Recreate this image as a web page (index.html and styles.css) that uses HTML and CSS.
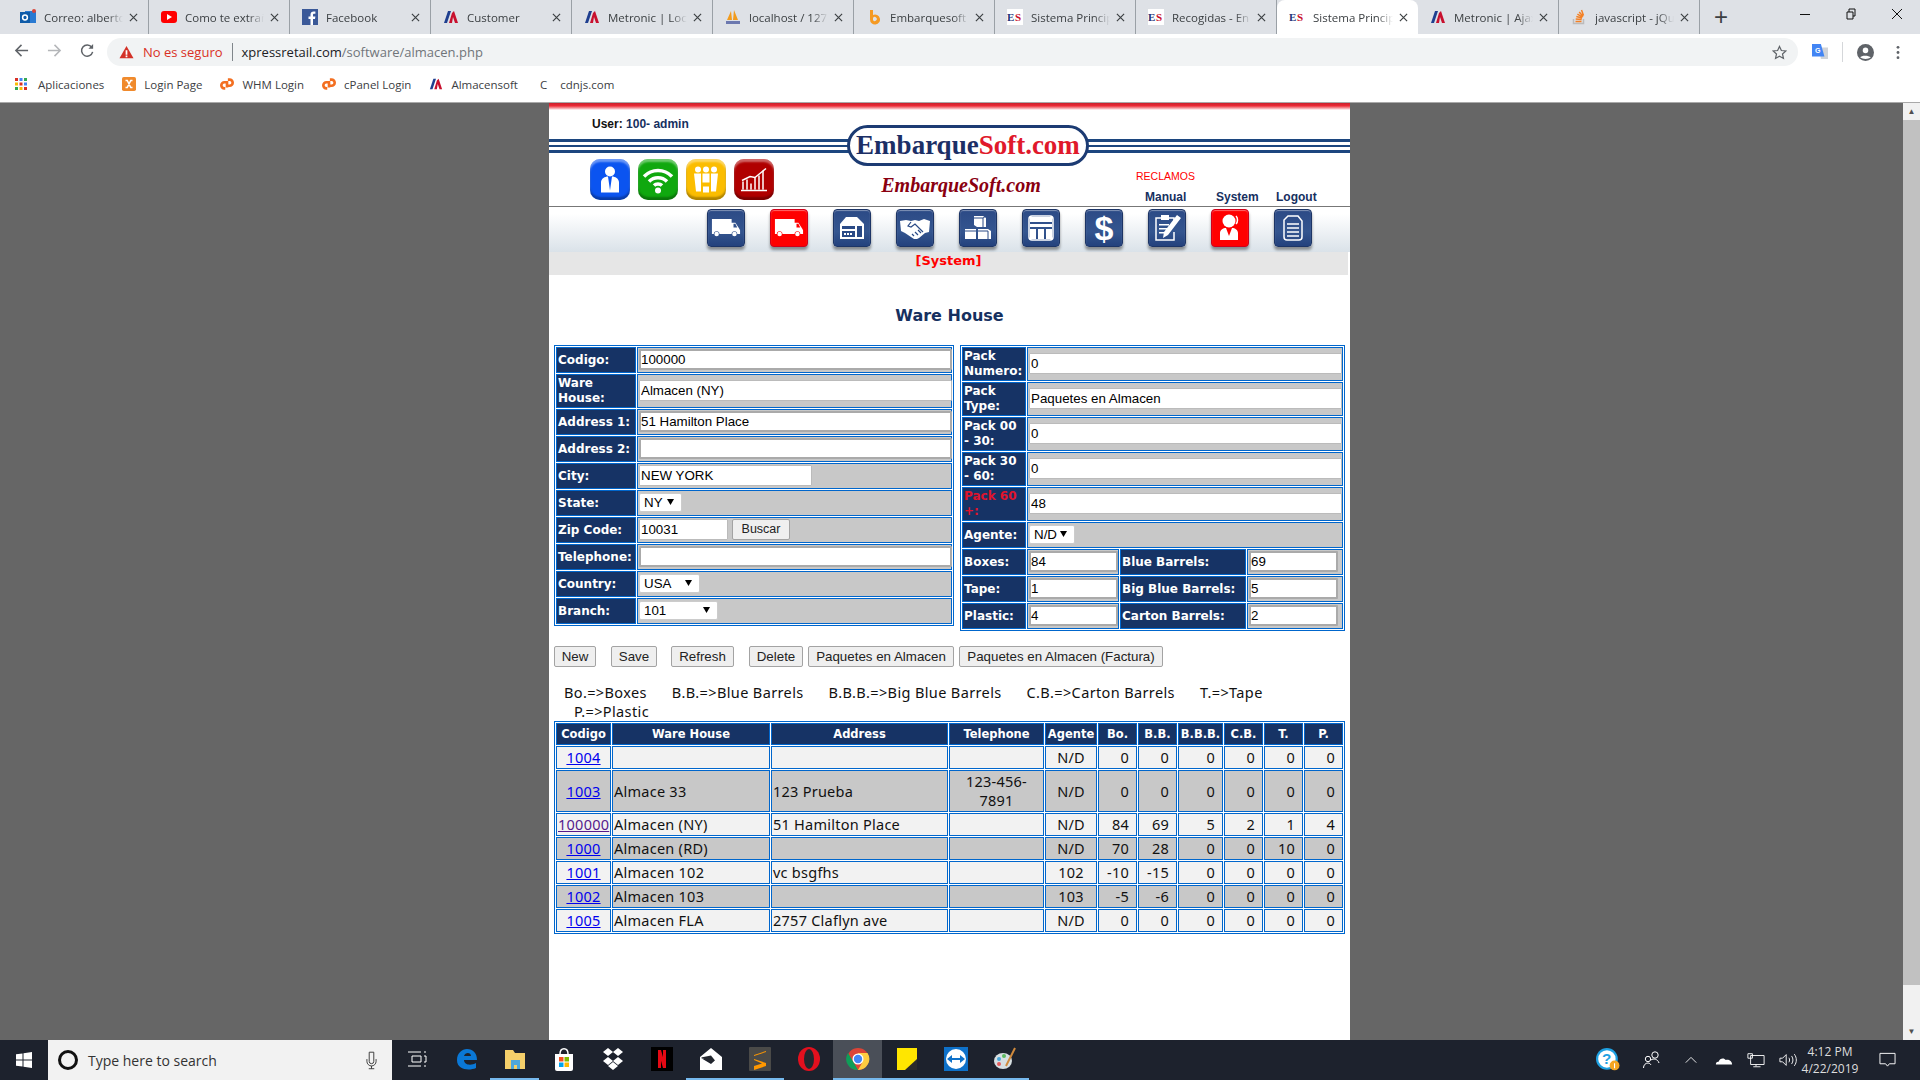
FILE: index.html
```html
<!DOCTYPE html>
<html lang="en">
<head>
    <meta charset="UTF-8">
    <title>Sistema Principal</title>
    <link rel="stylesheet" href="styles.css">
</head>
<body>
    <svg class="sprites" width="0" height="0">
        <symbol id="van" viewBox="0 0 32 22"><path fill="#fff" d="M1 2h21v4h4l4 6 1 2v4h-3a3 3 0 0 0-6 0H9a3 3 0 0 0-6 0H1zM24 7v4h4l-2-4z"/><circle cx="6" cy="18" r="2.4" fill="#fff"/><circle cx="25" cy="18" r="2.4" fill="#fff"/></symbol>
        <symbol id="ms" viewBox="0 0 16 16"><path fill="#1f3f8f" d="M1 14 5 2h3L4 14z"/><path fill="#c8102e" d="M6 14 9 4l2-2 4 12h-3l-2-6-1 6z"/></symbol>
        <symbol id="es" viewBox="0 0 16 16"><rect width="16" height="16" fill="#fff"/><text x="0" y="12" font-family="Liberation Serif" font-weight="bold" font-size="11" fill="#24367a">E</text><text x="8" y="12" font-family="Liberation Serif" font-weight="bold" font-size="11" fill="#c8102e">S</text></symbol>
        <symbol id="close" viewBox="0 0 10 10"><path stroke="#3c4043" stroke-width="1.3" d="M1 1l8 8M9 1 1 9"/></symbol>
        <symbol id="cp" viewBox="0 0 16 16"><path fill="none" stroke="#f36f21" stroke-width="3" d="M6 13H5a3.5 3.5 0 0 1 0-7h3v6M8 10h3a3.5 3.5 0 0 0 0-7H9"/></symbol>
    </svg>

    <div class="tabstrip">
        <div class="tab"><svg class="fav" viewBox="0 0 16 16"><rect x="5" y="2" width="11" height="12" fill="#2a7ad2"/><rect y="3" width="10" height="11" fill="#0f5ba8"/><circle cx="5" cy="8.5" r="2.4" fill="none" stroke="#fff" stroke-width="1.5"/><circle cx="14" cy="2" r="2" fill="#d9453a"/></svg><span class="tab-title">Correo: alberto</span><svg class="tab-x"><use href="#close"/></svg></div>
        <div class="tab"><svg class="fav" viewBox="0 0 16 16"><rect y="2" width="16" height="12" rx="3" fill="#f00"/><path fill="#fff" d="m6 5 5 3-5 3z"/></svg><span class="tab-title">Como te extraño</span><svg class="tab-x"><use href="#close"/></svg></div>
        <div class="tab"><svg class="fav" viewBox="0 0 16 16"><rect width="16" height="16" fill="#3b5998"/><path fill="#fff" d="M11 16v-6h2l.4-2.5H11V6c0-.8.3-1.2 1.2-1.2h1.2V2.6C13 2.5 12.300 2.500 11.600 2.500 9.800 2.500 8.500 3.600 8.500 5.700v1.800h-2V10h2v6z"/></svg><span class="tab-title">Facebook</span><svg class="tab-x"><use href="#close"/></svg></div>
        <div class="tab"><svg class="fav"><use href="#ms"/></svg><span class="tab-title">Customer</span><svg class="tab-x"><use href="#close"/></svg></div>
        <div class="tab"><svg class="fav"><use href="#ms"/></svg><span class="tab-title">Metronic | Local</span><svg class="tab-x"><use href="#close"/></svg></div>
        <div class="tab"><svg class="fav" viewBox="0 0 16 16"><path fill="#f29b1d" d="M2 11 6 2l1 9zM8 11l1-10 4 10z"/><rect x="1" y="12" width="14" height="3" fill="#6c78af"/></svg><span class="tab-title">localhost / 127</span><svg class="tab-x"><use href="#close"/></svg></div>
        <div class="tab"><svg class="fav" viewBox="0 0 16 16"><path fill="#f59a23" d="M4 1h3v5a5 5 0 1 1-3 4.500zM7 9v2a2 2 0 1 0 0-2z"/></svg><span class="tab-title">Embarquesoft</span><svg class="tab-x"><use href="#close"/></svg></div>
        <div class="tab"><svg class="fav"><use href="#es"/></svg><span class="tab-title">Sistema Principal</span><svg class="tab-x"><use href="#close"/></svg></div>
        <div class="tab"><svg class="fav"><use href="#es"/></svg><span class="tab-title">Recogidas - En</span><svg class="tab-x"><use href="#close"/></svg></div>
        <div class="tab tab-active"><svg class="fav"><use href="#es"/></svg><span class="tab-title">Sistema Principal</span><svg class="tab-x"><use href="#close"/></svg></div>
        <div class="tab"><svg class="fav"><use href="#ms"/></svg><span class="tab-title">Metronic | Ajax</span><svg class="tab-x"><use href="#close"/></svg></div>
        <div class="tab"><svg class="fav" viewBox="0 0 16 16"><path fill="none" stroke="#bcbbbb" stroke-width="1.500" d="M2.500 10v4.500h10V10"/><path fill="none" stroke="#f48024" stroke-width="1.500" d="M4.500 12.500h6M4.700 10l6 .6M5.300 7.600l5.800 1.500M6.400 5.200l5.200 3M8.200 3l3.900 4.500M10.500 1l2 5.500"/></svg><span class="tab-title">javascript - jQuery</span><svg class="tab-x"><use href="#close"/></svg></div>
        <div class="newtab">+</div>
        <div class="winctl">
            <svg viewBox="0 0 12 12"><path stroke="#111" d="M1 6.500h10"/></svg>
            <svg viewBox="0 0 12 12"><path fill="none" stroke="#111" d="M2 4h6v7H2zM4 4V1h6v7H8"/></svg>
            <svg viewBox="0 0 12 12"><path stroke="#111" d="m1 1 10 10M11 1 1 11"/></svg>
        </div>
    </div>

    <div class="toolbar">
        <svg class="tool-btn" viewBox="0 0 16 16"><path fill="none" stroke="#5f6368" stroke-width="1.600" d="M15 8H2M8 2 2 8l6 6"/></svg>
        <svg class="tool-btn" viewBox="0 0 16 16"><path fill="none" stroke="#b4b6b9" stroke-width="1.600" d="M1 8h13M8 2l6 6-6 6"/></svg>
        <svg class="tool-btn" viewBox="0 0 16 16"><path fill="none" stroke="#5f6368" stroke-width="1.600" d="M13.500 9.500a6 6 0 1 1-1-5"/><path fill="#5f6368" d="M14 1v5H9z"/></svg>
        <div class="omnibox">
            <svg class="warn" viewBox="0 0 16 16"><path fill="#d33127" d="M8 1 16 15H0z"/><path fill="#fff" d="M7 6h2v5H7zM7 12h2v2H7z"/></svg>
            <span class="insecure">No es seguro</span>
            <span class="url"><b>xpressretail.com</b>/software/almacen.php</span>
            <svg class="star" viewBox="0 0 16 16"><path fill="none" stroke="#5f6368" stroke-width="1.300" d="m8 1.500 2 4.400 4.800.5-3.600 3.200 1 4.700L8 11.900l-4.200 2.400 1-4.700L1.200 6.400 6 5.900z"/></svg>
        </div>
        <div class="tool-right">
            <svg class="translate" viewBox="0 0 18 20"><path fill="#d0d3d8" d="M8 5h10v13H10z"/><path fill="#4285f4" d="M0 1h10l4 14H0z"/><text x="3.500" y="11" font-family="Liberation Sans" font-weight="bold" font-size="8" fill="#fff">G</text></svg>
            <span class="tool-sep"></span>
            <svg class="profile" viewBox="0 0 16 16"><circle cx="8" cy="8" r="8" fill="#5f6368"/><circle cx="8" cy="6" r="2.600" fill="#fff"/><path fill="#fff" d="M3 12.500c1-2 8-2 10 0-2.500 2-7.500 2-10 0z"/></svg>
            <svg class="kebab" viewBox="0 0 4 16"><circle cx="2" cy="2.500" r="1.500" fill="#5f6368"/><circle cx="2" cy="8" r="1.500" fill="#5f6368"/><circle cx="2" cy="13.500" r="1.500" fill="#5f6368"/></svg>
        </div>
    </div>

    <div class="bookmarks">
        <span class="bm bm-apps"><svg class="bm-icon" viewBox="0 0 12 12"><path fill="#d93025" d="M0 0h3v3H0z"/><path fill="#4285f4" d="M4.500 0h3v3h-3z"/><path fill="#34a853" d="M9 0h3v3H9z"/><path fill="#fbbc04" d="M0 4.500h3v3H0z"/><path fill="#d93025" d="M4.500 4.500h3v3h-3z"/><path fill="#4285f4" d="M9 4.500h3v3H9z"/><path fill="#34a853" d="M0 9h3v3H0z"/><path fill="#fbbc04" d="M4.500 9h3v3h-3z"/><path fill="#d93025" d="M9 9h3v3H9z"/></svg>Aplicaciones</span>
        <span class="bm"><svg class="bm-icon" viewBox="0 0 16 16"><rect width="16" height="16" rx="2" fill="#f08a2c"/><path fill="none" stroke="#fff" stroke-width="1.800" d="M4 4h2l4 8h2M12 4h-2l-4 8H4"/></svg>Login Page</span>
        <span class="bm"><svg class="bm-icon"><use href="#cp"/></svg>WHM Login</span>
        <span class="bm"><svg class="bm-icon"><use href="#cp"/></svg>cPanel Login</span>
        <span class="bm"><svg class="bm-icon"><use href="#ms"/></svg>Almacensoft</span>
        <span class="bm"><span class="bm-c">C</span>cdnjs.com</span>
    </div>

    <div class="viewport">
        <div class="page-wrap">
            <div class="page">
                <div class="masthead">
                    <div class="mast-left">
                        <div class="user"><b>User:</b> <span>100- admin</span></div>
                        <div class="app-icons">
                            <div class="app-icon app-blue"><svg viewBox="0 0 32 32"><circle cx="16" cy="8" r="5" fill="#fff"/><path fill="#fff" d="M7 29V19c0-4 4-6 7-6l2 14 2-14c3 0 7 2 7 6v10z"/></svg></div>
                            <div class="app-icon app-green"><svg viewBox="0 0 32 32"><g fill="none" stroke="#fff" stroke-width="3.500"><path d="M2 13c8-8 20-8 28 0"/><path d="M7 18c5-5 13-5 18 0"/><path d="M12 22c2-2 6-2 8 0"/></g><circle cx="16" cy="27" r="3" fill="#fff"/></svg></div>
                            <div class="app-icon app-yellow"><svg viewBox="0 0 32 32"><g fill="#fff"><circle cx="8" cy="6" r="3"/><circle cx="16" cy="6" r="3"/><circle cx="24" cy="6" r="3"/><path d="M4 10h7v18H6zM12.500 10h7v9h-7zM21 10h7l-2 18h-5zM13 23h6v6h-6z"/></g></svg></div>
                            <div class="app-icon app-red"><svg viewBox="0 0 32 32"><g fill="none" stroke="#fff" stroke-width="1.500"><path d="M3 27h26M5 26V18M9 26V16M13 26v-6M17 26V14M21 26V12M25 26V7"/><path d="m4 17 8-4 5 1 11-9"/></g></svg></div>
                        </div>
                    </div>
                    <div class="mast-center">
                        <div class="logo"><span class="logo-navy">Embarque</span><span class="logo-red">Soft.com</span></div>
                        <div class="tagline">EmbarqueSoft.com</div>
                    </div>
                    <div class="mast-right">
                        <a class="reclamos">RECLAMOS</a>
                        <div class="mast-links"><a class="lnk-manual">Manual</a><a class="lnk-system">System</a><a>Logout</a></div>
                    </div>
                </div>

                <div class="nav-strip">
                    <div class="nav-icon"><svg viewBox="0 0 32 32"><use href="#van" x="1" y="5" width="30" height="21"/></svg></div>
                    <div class="nav-icon nav-red"><svg viewBox="0 0 32 32"><use href="#van" x="1" y="5" width="30" height="21"/></svg></div>
                    <div class="nav-icon"><svg viewBox="0 0 32 32"><path fill="#fff" d="M4 12 10 5h11l7 7v15H4z"/><path fill="#2a4a86" d="M6 14h13v3H6zM6 19h13v6H6zM21 14h5v11h-5z"/><path fill="#fff" d="M8 21h2v2H8zM11 21h2v2h-2zM14 21h2v2h-2z"/></svg></div>
                    <div class="nav-icon"><svg viewBox="0 0 32 32"><path fill="#fff" d="M1 9l6-1 5 1 4-1 4 1 5-2 6 2-1 11-4 1-6 5-2 1-3 0-3-2-6-4-4-2z"/><path fill="none" stroke="#2a4a86" stroke-width="1.200" d="m12 10-3 4 3 1 4-3 8 8M15 24l-2-2M19 23l-3-3M22 21l-3-3"/></svg></div>
                    <div class="nav-icon"><svg viewBox="0 0 32 32"><path fill="#fff" d="M12 4h9l3 2v9h-9l-3-2zM3 17h11v10H3zM16 17h10l3 2v8H16z"/><path fill="none" stroke="#2a4a86" d="M12 6h9l3-2M21 6v9M3 19h11M16 19h10v8"/></svg></div>
                    <div class="nav-icon"><svg viewBox="0 0 32 32"><rect x="4" y="4" width="24" height="24" rx="3" fill="none" stroke="#fff" stroke-width="1.500"/><path fill="#fff" d="M5 5h22v5H5zM5 12h22v3H5zM5 17h6v10H5zM13 17h6v10h-6zM21 17h6v10h-6z"/></svg></div>
                    <div class="nav-icon"><span class="nav-dollar">$</span></div>
                    <div class="nav-icon"><svg viewBox="0 0 32 32"><path fill="none" stroke="#fff" stroke-width="1.500" d="M18 6h5v6M10 6H5v22h18V20"/><path fill="#fff" d="M10 3h8v5h-8zM8 12h10v1.500H8zM8 16h8v1.500H8zM8 20h5v1.500H8zM26 3l4 3-13 17-5 3 1-6z"/></svg></div>
                    <div class="nav-icon nav-red"><svg viewBox="0 0 32 32"><circle cx="15" cy="9" r="6.500" fill="#fff"/><path fill="none" stroke="#fff" stroke-width="1.500" d="M22 4c2 2 2 6 0 8"/><path fill="#fff" d="M6 28V21c0-3 3-5 6-5l3 8 3-8c3 0 6 2 6 5v7z"/></svg></div>
                    <div class="nav-icon"><svg viewBox="0 0 32 32"><path fill="none" stroke="#fff" stroke-width="1.500" d="M11 4h10l4 5v16a3 3 0 0 1-3 3H10a3 3 0 0 1-3-3V8z"/><path stroke="#fff" stroke-width="1.500" d="M10 12h12M10 16h12M10 20h12M10 24h12"/></svg></div>
                </div>
                <div class="sys-band">[System]</div>

                <h2 class="page-title">Ware House</h2>

                <div class="forms">
                    <table class="ftable ftable-left">
                        <colgroup><col class="c-l1"><col></colgroup>
                        <tr><th>Codigo:</th><td><input class="inp inp-full" value="100000"></td></tr>
                        <tr class="row-tall"><th>Ware House:</th><td><input class="inp inp-full inp-thin" value="Almacen (NY)"></td></tr>
                        <tr><th>Address 1:</th><td><input class="inp inp-full" value="51 Hamilton Place"></td></tr>
                        <tr><th>Address 2:</th><td><input class="inp inp-full" value=""></td></tr>
                        <tr><th>City:</th><td><input class="inp inp-city inp-thin" value="NEW YORK"></td></tr>
                        <tr><th>State:</th><td><select class="sel sel-state"><option>NY</option></select></td></tr>
                        <tr><th>Zip Code:</th><td><input class="inp inp-zip inp-thin" value="10031"><button class="btn btn-buscar">Buscar</button></td></tr>
                        <tr><th>Telephone:</th><td><input class="inp inp-full" value=""></td></tr>
                        <tr><th>Country:</th><td><select class="sel sel-country"><option>USA</option></select></td></tr>
                        <tr><th>Branch:</th><td><select class="sel sel-branch"><option>101</option></select></td></tr>
                    </table>

                    <table class="ftable ftable-right">
                        <colgroup><col class="c-r1"><col class="c-r2"><col class="c-r3"><col></colgroup>
                        <tr class="row-tall"><th>Pack Numero:</th><td colspan="3"><input class="inp inp-full inp-thin" value="0"></td></tr>
                        <tr class="row-tall"><th>Pack Type:</th><td colspan="3"><input class="inp inp-full inp-thin" value="Paquetes en Almacen"></td></tr>
                        <tr class="row-tall"><th>Pack 00 - 30:</th><td colspan="3"><input class="inp inp-full inp-thin" value="0"></td></tr>
                        <tr class="row-tall"><th>Pack 30 - 60:</th><td colspan="3"><input class="inp inp-full inp-thin" value="0"></td></tr>
                        <tr class="row-tall"><th class="th-alert">Pack 60 +:</th><td colspan="3"><input class="inp inp-full inp-thin" value="48"></td></tr>
                        <tr><th>Agente:</th><td colspan="3"><select class="sel sel-agent"><option>N/D</option></select></td></tr>
                        <tr><th>Boxes:</th><td><input class="inp inp-small" value="84"></td><th>Blue Barrels:</th><td><input class="inp inp-small" value="69"></td></tr>
                        <tr><th>Tape:</th><td><input class="inp inp-small" value="1"></td><th>Big Blue Barrels:</th><td><input class="inp inp-small" value="5"></td></tr>
                        <tr><th>Plastic:</th><td><input class="inp inp-small" value="4"></td><th>Carton Barrels:</th><td><input class="inp inp-small" value="2"></td></tr>
                    </table>
                </div>

                <div class="actions">
                    <button class="btn btn-new">New</button>
                    <button class="btn btn-save">Save</button>
                    <button class="btn btn-refresh">Refresh</button>
                    <button class="btn btn-delete">Delete</button>
                    <button class="btn btn-paq">Paquetes en Almacen</button>
                    <button class="btn btn-fact">Paquetes en Almacen (Factura)</button>
                </div>

                <div class="legend">
                    <span>Bo.=&gt;Boxes</span>
                    <span>B.B.=&gt;Blue Barrels</span>
                    <span>B.B.B.=&gt;Big Blue Barrels</span>
                    <span>C.B.=&gt;Carton Barrels</span>
                    <span>T.=&gt;Tape</span>
                    <span class="legend-last">P.=&gt;Plastic</span>
                </div>

                <table class="dtable">
                    <colgroup>
                        <col class="d1"><col class="d2"><col class="d3"><col class="d4"><col class="d5">
                        <col class="d6"><col class="d6"><col class="d8"><col class="d6"><col class="d6"><col class="d6">
                    </colgroup>
                    <thead>
                        <tr><th>Codigo</th><th>Ware House</th><th>Address</th><th>Telephone</th><th>Agente</th><th>Bo.</th><th>B.B.</th><th>B.B.B.</th><th>C.B.</th><th>T.</th><th>P.</th></tr>
                    </thead>
                    <tbody>
                        <tr><td class="ctr"><a href="#1004">1004</a></td><td></td><td></td><td></td><td class="ctr">N/D</td><td class="num">0</td><td class="num">0</td><td class="num">0</td><td class="num">0</td><td class="num">0</td><td class="num">0</td></tr>
                        <tr class="row-two"><td class="ctr"><a href="#1003">1003</a></td><td>Almace 33</td><td>123 Prueba</td><td class="ctr">123-456-7891</td><td class="ctr">N/D</td><td class="num">0</td><td class="num">0</td><td class="num">0</td><td class="num">0</td><td class="num">0</td><td class="num">0</td></tr>
                        <tr><td class="ctr"><a class="visited" href="#100000">100000</a></td><td>Almacen (NY)</td><td>51 Hamilton Place</td><td></td><td class="ctr">N/D</td><td class="num">84</td><td class="num">69</td><td class="num">5</td><td class="num">2</td><td class="num">1</td><td class="num">4</td></tr>
                        <tr><td class="ctr"><a href="#1000">1000</a></td><td>Almacen (RD)</td><td></td><td></td><td class="ctr">N/D</td><td class="num">70</td><td class="num">28</td><td class="num">0</td><td class="num">0</td><td class="num">10</td><td class="num">0</td></tr>
                        <tr><td class="ctr"><a href="#1001">1001</a></td><td>Almacen 102</td><td>vc bsgfhs</td><td></td><td class="ctr">102</td><td class="num">-10</td><td class="num">-15</td><td class="num">0</td><td class="num">0</td><td class="num">0</td><td class="num">0</td></tr>
                        <tr><td class="ctr"><a href="#1002">1002</a></td><td>Almacen 103</td><td></td><td></td><td class="ctr">103</td><td class="num">-5</td><td class="num">-6</td><td class="num">0</td><td class="num">0</td><td class="num">0</td><td class="num">0</td></tr>
                        <tr><td class="ctr"><a href="#1005">1005</a></td><td>Almacen FLA</td><td>2757 Claflyn ave</td><td></td><td class="ctr">N/D</td><td class="num">0</td><td class="num">0</td><td class="num">0</td><td class="num">0</td><td class="num">0</td><td class="num">0</td></tr>
                    </tbody>
                </table>
            </div>
        </div>
        <div class="scrollbar">
            <span class="sb-arrow">▲</span>
            <div class="sb-thumb"></div>
            <span class="sb-arrow">▼</span>
        </div>
    </div>

    <div class="taskbar">
        <svg class="start" viewBox="0 0 16 16"><path fill="#fff" d="M0 2.300 6.500 1.400V7.500H0zM7.500 1.300 16 0V7.500H7.500zM0 8.500H6.500V14.600L0 13.700zM7.500 8.500H16V16L7.500 14.700z"/></svg>
        <div class="search">
            <span class="cortana"></span>
            <span class="search-text">Type here to search</span>
            <svg class="mic" viewBox="0 0 12 20"><path fill="none" stroke="#333" d="M3.500 1.500h5v10a2.500 2.500 0 0 1-5 0zM1 9v2.500a5 5 0 0 0 10 0V9M6 16.500v3M3 19.500h6"/></svg>
        </div>
        <div class="task-icons">
            <span class="task"><svg viewBox="0 0 20 20"><g fill="none" stroke="#fff"><path d="M1 3h13M1 17h13M5 7h9v6H5z"/><path d="M17 3h2M17 7h2v6h-2M17 17h2"/></g></svg></span>
            <span class="task"><svg class="t-big" viewBox="0 0 24 24"><path fill="#0a78d7" d="M3 13C3 6 8 2 13 2c6 0 10 4 10 11H10c0 5 7 6 12 3v5c-7 3-19 2-19-8zm7-4h7c0-4-6-4-7 0z"/></svg></span>
            <span class="task task-on"><svg class="t-big" viewBox="0 0 24 24"><path fill="#f5cf6a" d="M2 3h8l2 3h10v16H2z"/><path fill="#4fa7dd" d="M8 13h9v9h-3v-4h-3v4H8z"/></svg></span>
            <span class="task"><svg class="t-big" viewBox="0 0 24 24"><path fill="none" stroke="#fff" stroke-width="1.500" d="M8 7c0-7 8-7 8 0"/><path fill="#fff" d="M3 7h18v15a2 2 0 0 1-2 2H5a2 2 0 0 1-2-2z"/><path fill="#f25022" d="M7 10h4.500v4.500H7z"/><path fill="#7fba00" d="M12.500 10H17v4.500h-4.500z"/><path fill="#00a4ef" d="M7 15.500h4.500V20H7z"/><path fill="#ffb900" d="M12.500 15.500H17V20h-4.500z"/></svg></span>
            <span class="task"><svg class="t-big" viewBox="0 0 24 24"><path fill="#fff" d="m7 1 5 4-5 4-5-4zm10 0 5 4-5 4-5-4zM7 10l5 4-5 4-5-4zm10 0 5 4-5 4-5-4zM12 15l5 4-5 4-5-4z"/></svg></span>
            <span class="task"><svg class="t-big" viewBox="0 0 24 24"><rect x="1" y="0" width="22" height="24" fill="#000"/><path fill="#e50914" d="M8 3h3l5 18h-3zM8 3h3v18H8zM13 3h3v18h-3z"/></svg></span>
            <span class="task task-on"><svg class="t-big" viewBox="0 0 24 24"><path fill="#fff" d="M12 1 23 10v13H1V10zM2 11l10 6 3-3z"/><path fill="#23272f" d="M2 10.500l10-2 4 5-3 2z"/></svg></span>
            <span class="task task-on"><svg class="t-big" viewBox="0 0 24 24"><rect x="1" y="0" width="22" height="24" rx="1" fill="#4a4a48"/><path fill="#ff9800" d="m18 4-12 4v4l12 4v3L6 23v-4l8-2.500L6 13V9l12-4z"/></svg></span>
            <span class="task"><svg class="t-big" viewBox="0 0 24 24"><ellipse cx="12" cy="12" rx="11" ry="12" fill="#e3101e"/><ellipse cx="12" cy="12" rx="5" ry="10" fill="#23272f"/></svg></span>
            <span class="task task-on task-active"><svg class="t-big" viewBox="0 0 24 24"><circle cx="12" cy="12" r="11" fill="#db4437"/><path fill="#0f9d58" d="M12 23A11 11 0 0 1 2 6l6 10z"/><path fill="#ffcd40" d="M12 23a11 11 0 0 0 9.500-17H12l4 10z"/><circle cx="12" cy="12" r="5.500" fill="#fff"/><circle cx="12" cy="12" r="4.200" fill="#4285f4"/></svg></span>
            <span class="task task-on"><svg class="t-big" viewBox="0 0 24 24"><path fill="#ffe600" d="M2 1h20v22H2z"/><path fill="#2b2b2b" d="m10 23 12-11v11z"/></svg></span>
            <span class="task task-on"><svg class="t-big" viewBox="0 0 24 24"><rect width="24" height="24" fill="#0e71c9"/><circle cx="12" cy="12" r="10" fill="#fff"/><path fill="#0e71c9" d="m3 12 5-4v3h8V8l5 4-5 4v-3H8v3z"/></svg></span>
            <span class="task task-on"><svg class="t-big" viewBox="0 0 24 24"><ellipse cx="10" cy="14" rx="9" ry="8" fill="#d7dfe2"/><circle cx="6" cy="12" r="2" fill="#4aa6d8"/><circle cx="11" cy="9" r="2" fill="#5dba60"/><circle cx="6" cy="17" r="2" fill="#e35d5d"/><path stroke="#d08a3c" stroke-width="2" d="M22 1 13 19"/></svg></span>
        </div>
        <div class="tray">
            <span class="tray-item tray-help"><svg viewBox="0 0 22 22"><circle cx="10" cy="10" r="10" fill="#1ea1e2"/><circle cx="10" cy="10" r="8" fill="#fff"/><text x="5.500" y="15" font-family="Liberation Sans" font-weight="bold" font-size="14" fill="#1ea1e2">?</text><circle cx="17" cy="16" r="4.500" fill="#f5a623"/><path stroke="#fff" d="M17 14v4.500"/></svg></span>
            <span class="tray-item tray-people"><svg viewBox="0 0 20 20"><g fill="none" stroke="#fff"><circle cx="13" cy="5" r="3.200"/><circle cx="6" cy="9" r="2.700"/><path d="M1.500 18c0-3 2-5 4.500-5 1.500 0 2.500 1 3 2M9 10c2-2 7-1 8 3"/></g></svg></span>
            <span class="tray-item tray-chev"><svg viewBox="0 0 16 16"><path fill="none" stroke="#fff" d="m2 11 6-6 6 6"/></svg></span>
            <span class="tray-item tray-cloud"><svg viewBox="0 0 20 16"><path fill="#fff" d="M1 13c0-3 2-3 3-3 1-4 6-5 8-2 3-1 7 1 7 5z"/></svg></span>
            <span class="tray-item tray-net"><svg viewBox="0 0 20 16"><path fill="none" stroke="#fff" d="M4 3h15v10H4zM10 13v2M7 15.500h8M1 1h5v5H1z"/></svg></span>
            <span class="tray-item tray-vol"><svg viewBox="0 0 20 16"><path fill="none" stroke="#fff" d="M1 6h3l4-4v12l-4-4H1zM11 5.500c1 1.500 1 3.500 0 5M14 3.500c2 3 2 6 0 9M17 1.500c3 4 3 9 0 13"/></svg></span>
            <div class="clock"><span>4:12 PM</span><span>4/22/2019</span></div>
            <span class="tray-item tray-note"><svg viewBox="0 0 18 16"><path fill="none" stroke="#fff" d="M1 1h16v11h-6l-2 2.500L7 12H1z"/></svg></span>
        </div>
    </div>
</body>
</html>
```

FILE: styles.css
```css
* {
    box-sizing: border-box;
}

body {
    margin: 0;
    height: 100vh;
    overflow: hidden;
    display: flex;
    flex-direction: column;
    font-family: 'Liberation Sans', sans-serif;
    background-color: #666;
}

.sprites {
    display: none;
}

/* browser chrome */
.tabstrip {
    height: 34px;
    flex: none;
    display: flex;
    align-items: center;
    padding-left: 8px;
    background-color: #dee1e6;
}

.tab {
    width: 141px;
    height: 34px;
    flex: none;
    display: flex;
    align-items: center;
    padding: 0 10px 0 12px;
    font-family: 'Open Sans', sans-serif;
    font-size: 11.5px;
    color: #3c4043;
    border-right: 1px solid #9aa0a6;
}

.tab-active {
    background-color: #fff;
    border-right: none;
    border-radius: 8px 8px 0 0;
}

.fav {
    width: 16px;
    height: 16px;
    flex: none;
}

.tab-title {
    flex: 1;
    margin-left: 8px;
    overflow: hidden;
    white-space: nowrap;
    -webkit-mask-image: linear-gradient(90deg, #000 80%, transparent);
    mask-image: linear-gradient(90deg, #000 80%, transparent);
}

.tab-x {
    width: 9px;
    height: 9px;
    flex: none;
    margin-left: 6px;
}

.newtab {
    margin-left: 14px;
    font-size: 24px;
    font-weight: 300;
    color: #3c4043;
}

.winctl {
    margin-left: auto;
    display: flex;
    align-items: center;
    gap: 34px;
    padding-right: 17px;
    margin-top: -6px;
}

.winctl svg {
    width: 12px;
    height: 12px;
}

.toolbar {
    height: 32px;
    flex: none;
    display: flex;
    align-items: center;
    padding-left: 14px;
    background-color: #fff;
}

.tool-btn {
    width: 15px;
    height: 15px;
    margin-right: 18px;
}

.omnibox {
    width: 1691px;
    height: 28px;
    margin-left: -6px;
    margin-top: 4px;
    display: flex;
    align-items: center;
    padding: 0 11px 0 12px;
    background-color: #f1f3f4;
    border-radius: 14px;
    font-family: 'Open Sans', sans-serif;
    font-size: 13px;
}

.warn {
    width: 15px;
    height: 14px;
    margin-right: 9px;
}

.insecure {
    color: #d93025;
    padding-right: 9px;
    border-right: 1px solid #80868b;
    line-height: 18px;
}

.url {
    margin-left: 9px;
    color: #70757a;
}

.url b {
    font-weight: 400;
    color: #202124;
}

.star {
    width: 15px;
    height: 15px;
    margin-left: auto;
}

.tool-right {
    display: flex;
    align-items: center;
    margin-left: 14px;
    margin-top: 4px;
}

.translate {
    width: 16px;
    height: 18px;
}

.tool-sep {
    width: 1px;
    height: 20px;
    margin: 0 14px 0 14px;
    background-color: #d5d7da;
}

.profile {
    width: 17px;
    height: 17px;
}

.kebab {
    width: 4px;
    height: 15px;
    margin-left: 22px;
}

.bookmarks {
    height: 37px;
    flex: none;
    display: flex;
    align-items: center;
    gap: 18px;
    padding-left: 15px;
    background-color: #fff;
    border-bottom: 1px solid #a9a9a9;
    font-family: 'Open Sans', sans-serif;
    font-size: 11.5px;
    color: #3c4043;
}

.bm {
    display: flex;
    align-items: center;
    white-space: nowrap;
}

.bm-icon {
    width: 14px;
    height: 14px;
    margin-right: 8px;
    flex: none;
}

.bm-apps .bm-icon {
    width: 12px;
    height: 12px;
    margin-right: 11px;
}

.bm-c {
    margin: 0 13px 0 4px;
}

/* viewport + page */
.viewport {
    flex: 1;
    min-height: 0;
    display: flex;
}

.page-wrap {
    flex: 1;
    display: flex;
    justify-content: center;
    padding-right: 4px;
    overflow: hidden;
}

.page {
    width: 801px;
    background-color: #fff;
}

.masthead {
    height: 104px;
    display: flex;
    border-bottom: 1px solid #777;
    background:
        linear-gradient(#c9212e, #ec2a35 40%, #f6b4b8 80%, #fff) top / 100% 7px no-repeat,
        linear-gradient(#1c467f, #1c467f) 0 36px / 100% 3px no-repeat,
        linear-gradient(#1c467f, #1c467f) 0 42px / 100% 2px no-repeat,
        linear-gradient(#1c467f, #1c467f) 0 47px / 100% 3px no-repeat,
        #fff;
}

.mast-left {
    width: 298px;
    flex: none;
    padding: 14px 0 0 41px;
}

.user {
    padding-left: 2px;
    font-size: 12px;
    line-height: 14px;
    font-weight: bold;
    color: #111;
}

.user span {
    color: #16305f;
}

.app-icons {
    display: flex;
    gap: 8px;
    margin-top: 28px;
}

.app-icon {
    width: 40px;
    height: 41px;
    padding: 4px;
    border-radius: 10px;
    box-shadow: inset 0 -3px 2px rgba(0, 0, 0, 0.3), inset 0 3px 2px rgba(255, 255, 255, 0.4);
}

.app-icon svg {
    display: block;
    width: 32px;
    height: 33px;
}

.app-blue {
    background-color: #0b54f0;
}

.app-green {
    background-color: #10a80f;
}

.app-yellow {
    background-color: #fbbd00;
}

.app-red {
    background-color: #b00000;
}

.mast-center {
    width: 242px;
    flex: none;
    padding-top: 22px;
}

.logo {
    height: 41px;
    border: 3px solid #1c3b73;
    border-radius: 21px;
    background-color: #fff;
    text-align: center;
    font-family: 'Liberation Serif', serif;
    font-size: 27px;
    line-height: 35px;
    font-weight: bold;
    white-space: nowrap;
}

.logo-navy {
    color: #1c2f66;
}

.logo-red {
    color: #e0192b;
}

.tagline {
    margin-top: 9px;
    width: 228px;
    text-align: center;
    font-family: 'Liberation Serif', serif;
    font-size: 20px;
    line-height: 20px;
    font-weight: bold;
    font-style: italic;
    color: #8a0010;
}

.mast-right {
    flex: 1;
    padding: 66px 0 0 47px;
    font-size: 12px;
}

.reclamos {
    display: block;
    color: #f00;
    font-size: 10.5px;
    line-height: 14px;
}

.mast-links {
    display: flex;
    margin-top: 7px;
    margin-left: 9px;
    font-weight: bold;
    line-height: 14px;
    color: #16305f;
}

.lnk-manual {
    width: 71px;
}

.lnk-system {
    width: 60px;
}

.nav-strip {
    height: 45px;
    display: flex;
    gap: 25px;
    padding: 2px 0 0 158px;
    background: linear-gradient(#fff 15%, #dae2e9);
}

.nav-icon {
    width: 38px;
    height: 38px;
    padding: 2px;
    flex: none;
    border: 1px solid #1d3566;
    border-radius: 4px;
    background: linear-gradient(#2c4a86, #34558f 60%, #24427d);
    box-shadow: 0 3px 3px rgba(0, 0, 0, 0.4), inset 0 1px 1px rgba(255, 255, 255, 0.4);
    text-align: center;
}

.nav-icon svg {
    display: block;
    width: 32px;
    height: 32px;
}

.nav-red {
    background: #f00;
    border-color: #d0001a;
}

.nav-dollar {
    font-family: 'Liberation Sans', sans-serif;
    font-size: 34px;
    line-height: 32px;
    font-weight: bold;
    color: #fff;
}

.sys-band {
    width: 799px;
    height: 23px;
    background-color: #e6e6e6;
    text-align: center;
    font-family: 'DejaVu Sans', sans-serif;
    font-size: 13px;
    line-height: 18px;
    font-weight: bold;
    color: #f00;
}

.page-title {
    margin: 31px 0 20px;
    text-align: center;
    font-family: 'DejaVu Sans', sans-serif;
    font-size: 16px;
    line-height: 19px;
    font-weight: bold;
    color: #16305f;
}

/* form tables */
.forms {
    display: flex;
    align-items: flex-start;
    gap: 6px;
    padding-left: 5px;
}

.ftable {
    table-layout: fixed;
    border-collapse: separate;
    border-spacing: 1px;
    border: 1px solid #0066cc;
}

.ftable-left {
    width: 400px;
}

.ftable-right {
    width: 385px;
}

.c-l1 {
    width: 80px;
}

.c-r1 {
    width: 64px;
}

.c-r2 {
    width: 92px;
}

.c-r3 {
    width: 126px;
}

.ftable tr {
    height: 26px;
}

.ftable .row-tall {
    height: 34px;
}

.ftable th {
    padding: 0 1px;
    border: 1px solid #0066cc;
    background-color: #163365;
    text-align: left;
    font-family: 'DejaVu Sans', sans-serif;
    font-size: 12px;
    line-height: 15px;
    font-weight: bold;
    color: #fff;
}

.ftable .th-alert {
    color: #e0142c;
}

.ftable td {
    padding: 0 0 0 1px;
    border: 1px solid #0066cc;
    background-color: #c8c8c8;
    white-space: nowrap;
}

.inp {
    height: 21px;
    margin-bottom: 2px;
    padding: 0;
    vertical-align: middle;
    border: 2px solid #aaa;
    border-radius: 1px;
    background-color: #fff;
    font-family: 'Liberation Sans', sans-serif;
    font-size: 13.33px;
    color: #000;
    outline: none;
}

.inp-thin {
    border-width: 1px;
    border-color: #bbb;
    padding: 0 1px;
}

.inp-full {
    width: 313px;
}

.inp-city {
    width: 173px;
}

.inp-zip {
    width: 89px;
}

.inp-small {
    width: 89px;
}

.sel {
    appearance: none;
    -webkit-appearance: none;
    height: 19px;
    margin-bottom: 2px;
    padding: 0 0 0 4px;
    vertical-align: middle;
    border: 1px solid #ccc;
    border-radius: 2px;
    background: #fff url("data:image/svg+xml,%3Csvg xmlns='http://www.w3.org/2000/svg' width='7' height='6'%3E%3Cpath d='M0 0h7L3.500 6z'/%3E%3C/svg%3E") no-repeat right 7px center;
    font-family: 'Liberation Sans', sans-serif;
    font-size: 13.33px;
    color: #000;
}

.sel-state {
    width: 43px;
}

.sel-country {
    width: 61px;
}

.sel-branch {
    width: 79px;
}

.sel-agent {
    width: 46px;
}

.btn {
    height: 21px;
    padding: 0;
    border: 1px solid #a3a3a3;
    border-radius: 2px;
    background-color: #efefef;
    font-family: 'Liberation Sans', sans-serif;
    font-size: 13.33px;
    color: #222;
}

.btn-buscar {
    width: 58px;
    margin: 0 0 2px 4px;
    font-size: 12.5px;
    vertical-align: middle;
}

.actions {
    display: flex;
    padding: 15px 0 0 5px;
}

.btn-new {
    width: 42px;
}

.btn-save {
    width: 46px;
    margin-left: 15px;
}

.btn-refresh {
    width: 63px;
    margin-left: 14px;
}

.btn-delete {
    width: 54px;
    margin-left: 15px;
}

.btn-paq {
    width: 146px;
    margin-left: 5px;
}

.btn-fact {
    width: 204px;
    margin-left: 5px;
}

.legend {
    display: flex;
    flex-wrap: wrap;
    column-gap: 25px;
    padding: 16px 70px 0 15px;
    font-family: 'Noto Sans', sans-serif;
    font-size: 14.5px;
    line-height: 19px;
    letter-spacing: 0.37px;
    color: #111;
}

.legend-last {
    margin-left: 10px;
}

/* data table */
.dtable {
    width: 791px;
    margin: 0 0 0 5px;
    table-layout: fixed;
    border-collapse: separate;
    border-spacing: 1px;
    border: 1px solid #0066cc;
}

.d1 {
    width: 55px;
}

.d2 {
    width: 158px;
}

.d3 {
    width: 177px;
}

.d4 {
    width: 95px;
}

.d5 {
    width: 52px;
}

.d6 {
    width: 39px;
}

.d8 {
    width: 45px;
}

.dtable th {
    height: 22px;
    padding: 0;
    border: 1px solid #0066cc;
    background-color: #163365;
    font-family: 'DejaVu Sans', sans-serif;
    font-size: 11.5px;
    font-weight: bold;
    color: #fff;
}

.dtable td {
    height: 23px;
    padding: 0 1px;
    border: 1px solid #0066cc;
    background-color: #f2f2f2;
    font-family: 'Noto Sans', sans-serif;
    font-size: 14.5px;
    line-height: 19px;
    letter-spacing: 0.25px;
    color: #111;
}

.dtable .row-two td {
    height: 42px;
}

.dtable tbody tr:nth-child(even) td {
    background-color: #c8c8c8;
}

.dtable .ctr {
    text-align: center;
}

.dtable .num {
    padding-right: 7px;
    text-align: right;
}

.dtable a {
    color: #0000ee;
}

.dtable .visited {
    color: #551a8b;
}

.scrollbar {
    width: 17px;
    flex: none;
    display: flex;
    flex-direction: column;
    align-items: center;
    background-color: #f1f1f1;
    font-size: 8px;
    color: #505050;
}

.sb-arrow {
    height: 17px;
    line-height: 17px;
}

.sb-thumb {
    flex: 1;
    width: 100%;
    margin-bottom: 38px;
    background-color: #c1c1c1;
}

/* windows taskbar */
.taskbar {
    height: 40px;
    flex: none;
    display: flex;
    align-items: center;
    background-color: #1d222d;
}

.start {
    width: 16px;
    height: 16px;
    margin: 0 16px;
    flex: none;
}

.search {
    width: 344px;
    height: 40px;
    flex: none;
    display: flex;
    align-items: center;
    background-color: #f2f2f2;
}

.cortana {
    width: 20px;
    height: 20px;
    margin-left: 10px;
    border: 3px solid #111;
    border-radius: 50%;
}

.search-text {
    margin-left: 10px;
    font-family: 'Open Sans', sans-serif;
    font-size: 14px;
    color: #333;
}

.mic {
    width: 11px;
    height: 20px;
    margin-left: auto;
    margin-right: 15px;
}

.task-icons {
    display: flex;
    margin-left: 0;
}

.task {
    width: 49px;
    height: 40px;
    display: flex;
    align-items: center;
    justify-content: center;
    border-bottom: 2px solid transparent;
}

.task svg {
    width: 20px;
    height: 20px;
}

.task .t-big {
    width: 24px;
    height: 24px;
}

.task-on {
    border-bottom-color: #76b9ed;
}

.task-active {
    background-color: #4a4f58;
}

.tray {
    margin-left: auto;
    display: flex;
    align-items: center;
    height: 40px;
    color: #fff;
}

.tray-item {
    display: flex;
    align-items: center;
    justify-content: center;
}

.tray-item svg {
    width: 100%;
    height: 100%;
}

.tray-help {
    width: 24px;
    height: 24px;
    margin-right: 22px;
}

.tray-people {
    width: 20px;
    height: 20px;
    margin-right: 22px;
}

.tray-chev {
    width: 14px;
    height: 14px;
    margin-right: 17px;
}

.tray-cloud {
    width: 18px;
    height: 16px;
    margin-right: 14px;
}

.tray-net {
    width: 18px;
    height: 16px;
    margin-right: 14px;
}

.tray-vol {
    width: 18px;
    height: 16px;
    margin-right: 3px;
}

.clock {
    width: 60px;
    display: flex;
    flex-direction: column;
    align-items: center;
    font-family: 'Open Sans', sans-serif;
    font-size: 12px;
    line-height: 17px;
    color: #ddd;
    white-space: nowrap;
}

.tray-note {
    width: 17px;
    height: 16px;
    margin: 0 24px 0 19px;
}
```
